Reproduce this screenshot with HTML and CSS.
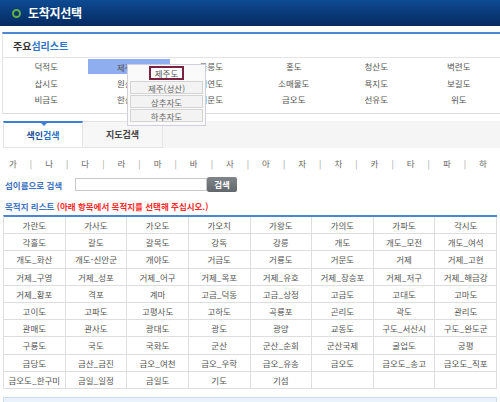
FILE: index.html
```html
<!DOCTYPE html>
<html lang="ko">
<head>
    <meta charset="UTF-8">
    <title>도착지선택</title>
    <link rel="stylesheet" href="styles.css">
</head>
<body>
    <div class="TopBar">
        <span class="topIcon"></span>
        <span class="topTitle">도착지선택</span>
    </div>

    <div class="content">
        <div class="islandBox">
            <h2 class="islandTitle">주요<span class="blue">섬리스트</span></h2>
            <div class="islandGrid">
                <div class="islandCell">덕적도</div>
                <div class="islandCell on">제주도</div>
                <div class="islandCell">울릉도</div>
                <div class="islandCell">홍도</div>
                <div class="islandCell">청산도</div>
                <div class="islandCell">벽련도</div>
                <div class="islandCell">삽시도</div>
                <div class="islandCell">원산도</div>
                <div class="islandCell">외연도</div>
                <div class="islandCell">소매물도</div>
                <div class="islandCell">욕지도</div>
                <div class="islandCell">보길도</div>
                <div class="islandCell">비금도</div>
                <div class="islandCell">한산도</div>
                <div class="islandCell">거문도</div>
                <div class="islandCell">금오도</div>
                <div class="islandCell">선유도</div>
                <div class="islandCell">위도</div>
            </div>

            <!-- 제주도 하위 선택 -->
            <div class="dropMenu">
                <div class="dropItem first"><span class="dropSel">제주도</span></div>
                <div class="dropItem">제주(성산)</div>
                <div class="dropItem">상추자도</div>
                <div class="dropItem">하추자도</div>
            </div>
        </div>

        <div class="tabs">
            <div class="tab active"><span class="dark">색인</span><span class="blue">검색</span></div>
            <div class="tab">지도검색</div>
        </div>

        <div class="consonants">
            <span>가</span><i>|</i><span>나</span><i>|</i><span>다</span><i>|</i><span>라</span><i>|</i>
            <span>마</span><i>|</i><span>바</span><i>|</i><span>사</span><i>|</i><span>아</span><i>|</i>
            <span>자</span><i>|</i><span>차</span><i>|</i><span>카</span><i>|</i><span>타</span><i>|</i>
            <span>파</span><i>|</i><span>하</span>
        </div>

        <div class="searchRow">
            <label for="islandName" class="searchLabel">섬이름으로 검색</label>
            <input type="text" id="islandName" class="searchInput">
            <button class="searchBtn">검색</button>
        </div>

        <div class="listTitle">목적지 리스트 <span class="red">(아래 항목에서 목적지를 선택해 주십시오.)</span></div>

        <div class="destGrid" id="destGrid"></div>

        <div class="bottomBox"></div>
    </div>

    <script>
    var places = [
        '가란도','가사도','가오도','가오치','가왕도','가의도','가파도','각시도',
        '각흘도','갈도','갈목도','강독','강릉','개도','개도_모전','개도_여석',
        '개도_화산','개도-신안군','개야도','거금도','거룡도','거문도','거제','거제_고현',
        '거제_구영','거제_성포','거제_어구','거제_옥포','거제_유호','거제_장승포','거제_저구','거제_해금강',
        '거제_황포','격포','계마','고금_덕동','고금_상정','고금도','고대도','고마도',
        '고이도','고파도','고평사도','고하도','곡룡포','곤리도','곽도','관리도',
        '관매도','관사도','광대도','광도','광양','교동도','구도_서산시','구도_완도군',
        '구룡도','국도','국화도','군산','군산_순회','군산국제','굴업도','궁평',
        '금당도','금산_금진','금오_여천','금오_우학','금오_유송','금오도','금오도_송고','금오도_직포',
        '금오도_한구미','금일_일정','금일도','기도','기섬','','',''
    ];

    var grid = document.getElementById('destGrid');
    places.forEach(function(name) {
        var cell = document.createElement('div');
        cell.className = 'destCell';
        cell.textContent = name;
        grid.appendChild(cell);
    });
    </script>
</body>
</html>
```

FILE: styles.css
```css
body {
    margin: 0;
    width: 500px;
    font-family: "Noto Sans CJK KR", "Noto Sans", sans-serif;
    font-size: 8.5px;
    color: #555;
    background: #fff;
    overflow: hidden;
}

.blue {
    color: #2f74c8;
}

.red {
    color: #ff2b2b;
}

/* top title bar */
.TopBar {
    height: 26px;
    display: flex;
    align-items: center;
    padding-left: 12px;
    gap: 7px;
    background: linear-gradient(#0d4b93, #062a60);
}

.topIcon {
    width: 9px;
    height: 9px;
    box-sizing: border-box;
    border: 2px solid #62b143;
    border-radius: 50%;
    background: #0a366f;
}

.topTitle {
    color: #fff;
    font-size: 12px;
    font-weight: 700;
    line-height: 14px;
    letter-spacing: -0.3px;
}

.content {
    padding: 6px 0 0 2px;
}

/* main island list */
.islandBox {
    position: relative;
    border-top: 2px solid #4d87cf;
    border-left: 1px solid #e3e3e3;
    border-bottom: 1px solid #dcdcdc;
}

.islandTitle {
    margin: 0;
    height: 23px;
    line-height: 23px;
    padding-left: 10px;
    font-size: 10px;
    font-weight: 700;
    color: #333;
    border-bottom: 1px solid #e4e4e4;
}

.islandGrid {
    display: grid;
    grid-template-columns: repeat(6, 1fr);
    grid-auto-rows: 16.5px;
    padding: 0 0 5.5px 2px;
}

.islandCell {
    display: flex;
    align-items: center;
    justify-content: center;
    color: #555;
}

.islandCell.on {
    background: #8eaef0;
    margin: 1px 0 0.5px;
}

.dropMenu {
    position: absolute;
    left: 124px;
    top: 30px;
    width: 79px;
    padding: 1px 2px 2px;
    box-sizing: border-box;
    background: #fafafa;
    border: 1px solid #cfd0dc;
    z-index: 2;
}

.dropItem {
    height: 13px;
    line-height: 12px;
    margin-bottom: 1px;
    text-align: center;
    border: 1px solid #d4d4d4;
    box-sizing: border-box;
    background: #f3f3f3;
    color: #666;
}

.dropItem.first {
    height: 14px;
    border: none;
    background: transparent;
    display: flex;
    justify-content: center;
}

.dropSel {
    display: block;
    width: 35px;
    height: 14px;
    line-height: 10px;
    box-sizing: border-box;
    border: 2px solid #7b2141;
    background: #fff;
    color: #555;
}

/* tabs */
.tabs {
    display: flex;
    height: 27px;
    margin: 7px 0 0 1px;
    background: #f5f5f5;
}

.tab {
    position: relative;
    width: 80px;
    box-sizing: border-box;
    display: flex;
    align-items: center;
    justify-content: center;
    font-size: 9px;
    font-weight: 700;
    color: #444;
    background: #f7f7f7;
    border: 1px solid #e4e4e4;
    border-left: none;
}

.tab.active {
    background: #fff;
    border-top: 2px solid #3b7fd6;
    border-left: 1px solid #e4e4e4;
}

.tab.active::after {
    content: "";
    position: absolute;
    top: 0;
    left: 37px;
    border-left: 3px solid transparent;
    border-right: 3px solid transparent;
    border-top: 3px solid #3b7fd6;
}

.dark {
    color: #1d4e94;
}

/* consonant index */
.consonants {
    display: flex;
    justify-content: space-between;
    align-items: center;
    height: 16px;
    margin: 7px 0 0 -2px;
    padding: 0 13px 0 9px;
    color: #666;
}

.consonants i {
    font-style: normal;
    color: #999;
}

/* search */
.searchRow {
    display: flex;
    align-items: center;
    height: 15px;
    margin-top: 6px;
    padding-left: 3px;
}

.searchLabel {
    width: 70px;
    font-weight: 700;
    color: #3e72c2;
}

.searchInput {
    width: 132px;
    height: 13px;
    margin: 0;
    padding: 0;
    box-sizing: border-box;
    border: 1px solid #c8c8c8;
}

.searchBtn {
    width: 30px;
    height: 15px;
    margin: 0;
    padding: 0;
    border: none;
    border-radius: 2px;
    background: linear-gradient(#80858a, #62676c);
    color: #fff;
    font-family: inherit;
    font-size: 8.5px;
    font-weight: 700;
    line-height: 15px;
}

.listTitle {
    margin-top: 8px;
    padding-left: 3px;
    height: 12px;
    line-height: 12px;
    font-weight: 700;
    color: #3e72c2;
}

/* destination grid */
.destGrid {
    display: grid;
    grid-template-columns: repeat(8, 1fr);
    width: 494px;
    margin: 3px 0 0 1px;
    border-top: 2px solid #4d86cf;
    border-left: 1px solid #dedede;
    box-sizing: border-box;
}

.destCell {
    height: 17.2px;
    box-sizing: border-box;
    display: flex;
    align-items: center;
    justify-content: center;
    white-space: nowrap;
    border-right: 1px solid #dedede;
    border-bottom: 1px solid #dedede;
    color: #555;
}

.bottomBox {
    width: 494px;
    height: 20px;
    margin: 8px 0 0 1px;
    box-sizing: border-box;
    background: #eaf2fb;
    border: 1px solid #cbdcf0;
}
```
